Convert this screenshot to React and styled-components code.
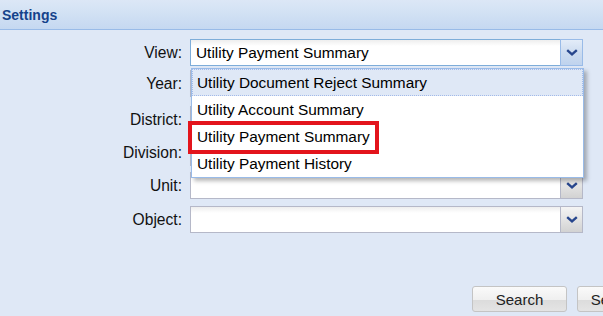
import React from 'react'
import styled, { createGlobalStyle } from 'styled-components'

const Global = createGlobalStyle`
    html, body {
        margin: 0;
        padding: 0;
        background: #dfe8f6;
    }
    body {
        font-family: "Liberation Sans", Arial, sans-serif;
    }
`

const Panel = styled.div`
    width: 603px;
    height: 316px;
    overflow: hidden;
    background: #dfe8f6;
    display: flex;
    flex-direction: column;
`

const Header = styled.div`
    height: 29px;
    border-bottom: 1px solid #99bbe8;
    background: linear-gradient(#dce7f6 0%, #d3e2f4 40%, #c5d8f1 100%);
    display: flex;
    align-items: center;
    padding-left: 2px;
    font-size: 14px;
    font-weight: bold;
    color: #15428b;
`

const Form = styled.div`
    display: flex;
    flex-direction: column;
    padding-top: 9px;
`

const Row = styled.div`
    display: grid;
    grid-template-columns: 182px 393px;
    column-gap: 8px;
    height: 27px;
    margin-top: ${p => p.$space || 0}px;
    position: relative;
    z-index: ${p => p.$top ? 2 : 1};
`

const Label = styled.label`
    text-align: right;
    font-size: 15.6px;
    line-height: 27px;
    color: #111;
`

const Combo = styled.div`
    position: relative;
    display: flex;
    height: 27px;
`

const Input = styled.div`
    flex: 1;
    border: 1px solid ${p => p.$focus ? '#7eadd9' : '#b5b8c8'};
    border-right: none;
    background: linear-gradient(#eeeeee 0px, #ffffff 6px);
    font-size: 15.4px;
    line-height: 25px;
    padding-left: 5px;
    color: #000;
    white-space: nowrap;
    overflow: hidden;
`

const Trigger = styled.div`
    width: 23px;
    box-sizing: border-box;
    border: 1px solid ${p => p.$focus ? '#99bbe8' : '#b5b8c8'};
    background: ${p => p.$focus
        ? 'linear-gradient(#e3ecf8 0%, #cddcf0 50%, #bfd3ee 100%)'
        : 'linear-gradient(#f4f4f4 0%, #e4e4e4 50%, #d2d2d2 100%)'};
    display: flex;
    align-items: center;
    justify-content: center;
    padding-bottom: 1px;
`

const List = styled.div`
    position: absolute;
    top: 29px;
    left: 1px;
    width: 393px;
    box-sizing: border-box;
    border: 1px solid #99bbe8;
    background: #fff;
    box-shadow: 3px 3px 4px rgba(0, 0, 0, 0.28);
`

const Item = styled.div`
    position: relative;
    height: 27px;
    box-sizing: border-box;
    padding-left: 4px;
    font-size: 15.4px;
    line-height: 25px;
    color: #000;
    white-space: nowrap;
    border: 1px dotted ${p => p.$active ? '#a3bae9' : 'transparent'};
    background: ${p => p.$active ? '#dfe8f6' : '#fff'};
`

const Mark = styled.span`
    position: absolute;
    z-index: 1;
    left: -5px;
    top: -3px;
    width: 191px;
    height: 33px;
    box-sizing: border-box;
    border: 4px solid #e3141c;
`

const Footer = styled.div`
    display: flex;
    gap: 10px;
    padding: 53px 0 0 472px;
`

const Button = styled.button`
    flex: none;
    width: 95px;
    height: 26px;
    border: 1px solid #c4c4c4;
    border-radius: 3px;
    background: linear-gradient(#fafafa 0%, #efefef 55%, #dcdcdc 56%, #e4e4e4 100%);
    font-family: "Liberation Sans", Arial, sans-serif;
    font-size: 15px;
    color: #222;
    padding: 0;
    text-align: center;
`

function Chevron () {
    return <svg width="12" height="7" viewBox="0 0 12 7">
        <path d="M1.2 1.2 L6 5.4 L10.8 1.2" fill="none" stroke="#27468d" strokeWidth="2.4" />
    </svg>
}

const views = [
    'Utility Document Reject Summary',
    'Utility Account Summary',
    'Utility Payment Summary',
    'Utility Payment History',
]

function Field ({ label, value, focus, space, children }) {
    return <Row $space={space} $top={!!children}>
        <Label>{label}</Label>
        <Combo>
            <Input $focus={focus}>{value}</Input>
            <Trigger $focus={focus}><Chevron /></Trigger>
            {children}
        </Combo>
    </Row>
}

export default function App () {
    return <Panel>
        <Global />
        <Header>Settings</Header>
        <Form>
            <Field label="View:" value="Utility Payment Summary" focus>
                <List>
                    {views.map((v, i) => <Item key={v} $active={i === 0}>
                        {v}
                        {i === 2 && <Mark />}
                    </Item>)}
                </List>
            </Field>
            <Field label="Year:" space={4} />
            <Field label="District:" space={9} />
            <Field label="Division:" space={6} />
            <Field label="Unit:" space={6} />
            <Field label="Object:" space={7} />
        </Form>
        <Footer>
            <Button>Search</Button>
            <Button>Search All</Button>
        </Footer>
    </Panel>
}
